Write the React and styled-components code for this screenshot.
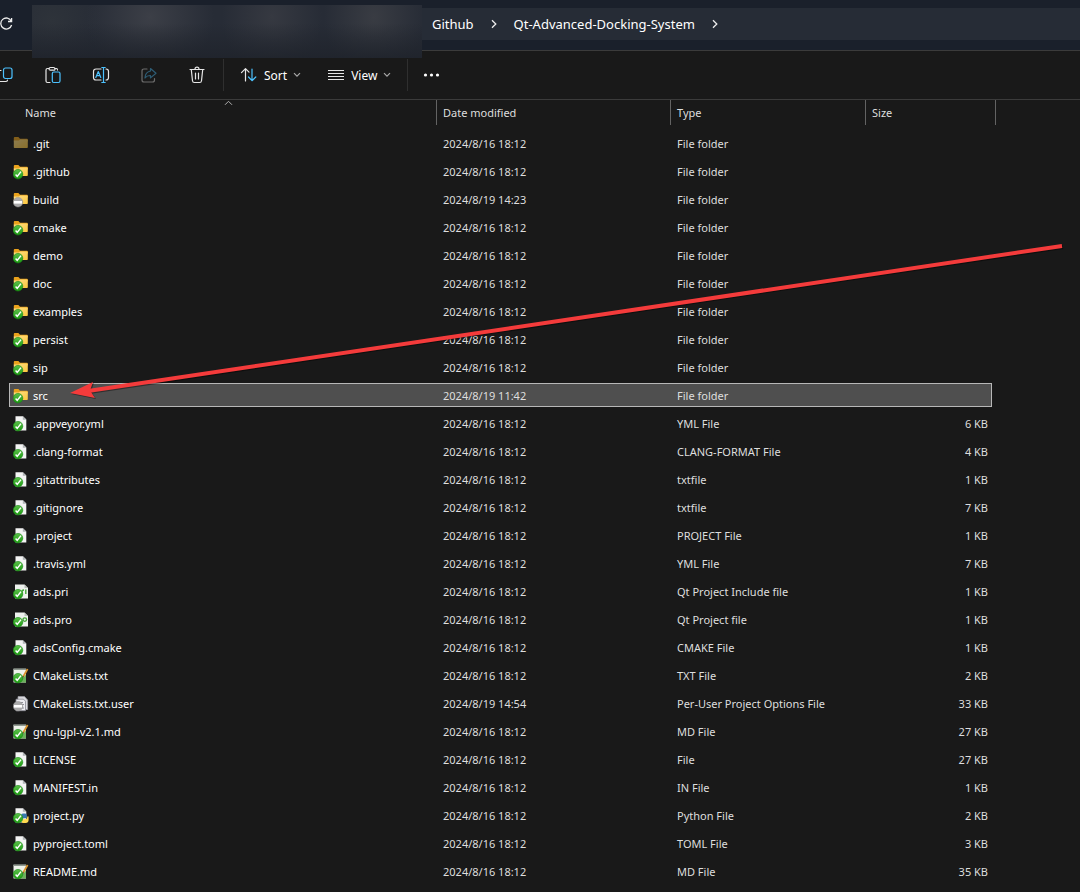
import React from "react";
import styled, { createGlobalStyle } from "styled-components";

const Global = createGlobalStyle`
  * { box-sizing: border-box; }
  body {
    margin: 0;
    background: #191919;
    color: #fff;
    font-family: "Noto Sans", "Open Sans", sans-serif;
    font-size: 12px;
  }
  button { font: inherit; color: inherit; background: none; border: 0; padding: 0; margin: 0; }
  svg { display: block; flex: none; }
`;

const Window = styled.main`
  min-height: 100vh;
  overflow: hidden;
`;

const AddressBar = styled.header`
  position: relative;
  display: flex;
  align-items: center;
  height: 51px;
  padding-bottom: 2px;
  background: #1a202b;
  border-bottom: 1px solid #3b3b3b;
`;

const RefreshButton = styled.button`
  width: 32px;
  height: 32px;
`;

const HiddenPath = styled.div`
  position: absolute;
  z-index: 1;
  left: 32px;
  top: 5px;
  width: 390px;
  height: 53px;
  background:
    linear-gradient(180deg, rgba(31, 35, 43, 0) 35%, rgba(31, 35, 43, 0.85) 100%),
    radial-gradient(ellipse 64px 60px at 118px 12px, #3c3f47, transparent),
    radial-gradient(ellipse 50px 60px at 240px 12px, #363941, transparent),
    radial-gradient(ellipse 50px 60px at 342px 12px, #393c43, transparent),
    radial-gradient(ellipse 50px 50px at 20px 16px, #2e333a, transparent),
    #272c36;
`;

const Crumbs = styled.nav`
  display: flex;
  align-items: center;
  flex: 1;
  height: 32px;
  margin-left: 390px;
  padding-left: 10px;
  background: #262c36;
  font-size: 13px;
`;

const Crumb = styled.a`
  color: #fff;
  text-decoration: none;
  white-space: nowrap;
`;

const CrumbArrow = styled.button`
  width: 40px;
  height: 32px;
  display: grid;
  place-items: center;
`;

const Toolbar = styled.div`
  display: flex;
  align-items: center;
  height: 49px;
  border-bottom: 1px solid #3b3b3b;
`;

const IconTools = styled.div`
  display: flex;
  gap: 30px;
  margin-left: -4px;
  padding-right: 17px;
`;

const MenuTools = styled.div`
  display: flex;
  gap: 26px;
  padding: 0 16px;
`;

const ToolButton = styled.button`
  display: flex;
  align-items: center;
  gap: 6px;
  height: 32px;
  opacity: ${(p) => (p.disabled ? 0.4 : 1)};
`;

const Divider = styled.span`
  width: 1px;
  height: 32px;
  background: #2f2f2f;
`;

const MoreButton = styled(ToolButton)`
  margin-left: 15px;
`;

const List = styled.section`
  position: relative;
  padding-right: 84px;
`;

const Table = styled.table`
  width: 100%;
  table-layout: fixed;
  border-collapse: separate;
  border-spacing: 0;
  font-size: 11px;
  line-height: 16px;
`;

const Column = styled.col`
  width: ${(p) => p.$width};
`;

const HeadCell = styled.th`
  position: relative;
  height: 30px;
  padding: 0 6px 4px ${(p) => (p.$first ? "25px" : "6px")};
  font-weight: 400;
  text-align: left;
  color: #dedede;
  background: linear-gradient(#636363, #636363) right top / 1px 25px no-repeat;
`;

const SortMark = styled.svg`
  position: absolute;
  top: 0;
  left: calc(50% + 5px);
`;

const Row = styled.tr`
  position: relative;
  z-index: 0;
`;

const Cell = styled.td`
  height: 28px;
  padding: 0 8px 0 6px;
  color: #dedede;
  white-space: nowrap;
  text-align: ${(p) => (p.$right ? "right" : "left")};
`;

const NameCell = styled(Cell)`
  padding-left: 13px;
  color: #fff;

  /* The selection frame spans the whole row, which is its containing block. */
  ${Row}[aria-selected="true"] &::before {
    content: "";
    position: absolute;
    z-index: -1;
    inset: 1px 4px 3px 9px;
    background: #4f4f4f;
    border: 1px solid #b8b8b8;
  }
`;

const FileName = styled.div`
  display: flex;
  align-items: center;
  gap: 4px;
`;

const Arrow = styled.svg`
  position: absolute;
  left: 70px;
  top: 140px;
  pointer-events: none;
`;

const W = "#e6e6e6";
const B = "#4cc2ff";

function Icon({ children, size = 18 }) {
  return (
    <svg width={size} height={size} viewBox={`0 0 ${size} ${size}`} fill="none" stroke={W} strokeWidth="1.2" strokeLinecap="round" strokeLinejoin="round" aria-hidden="true">
      {children}
    </svg>
  );
}

function Chevron() {
  return (
    <svg width="8" height="6" viewBox="0 0 8 6" fill="none" stroke="#a8a8a8" strokeWidth="1.2" aria-hidden="true">
      <path d="M1 1.2l3 3 3-3" />
    </svg>
  );
}

function CrumbChevron() {
  return (
    <svg width="6" height="10" viewBox="0 0 6 10" fill="none" stroke="#eee" strokeWidth="1.3" aria-hidden="true">
      <path d="M1 1.3L4.8 5 1 8.7" />
    </svg>
  );
}

function Badge({ kind }) {
  if (kind === "ok")
    return (
      <g>
        <circle cx="5" cy="10.2" r="4.8" fill="url(#ok)" stroke="#188c14" strokeWidth=".6" />
        <path d="M2.6 10.6l1.6 1.8 3.8-4.800" fill="none" stroke="#fff" strokeWidth="1.5" />
      </g>
    );
  if (kind === "ignored")
    return (
      <g>
        <circle cx="5" cy="10.2" r="4.8" fill="#aaa" stroke="#999" strokeWidth=".5" />
        <rect x="1" y="9" width="8" height="2.600" fill="#fff" />
      </g>
    );
  return null;
}

function FileIcon({ kind, badge }) {
  return (
    <svg width="16" height="16" viewBox="0 0 16 16" aria-hidden="true">
      {kind === "folder" && (
        <g opacity={badge ? 1 : 0.5}>
          <path d="M.8 2q0-1 1-1h3.600l1.600 1.700h7q.8 0 .8.8v2h-14z" fill="#eaa21c" />
          <path d="M.8 4.500h5l1.400-1h6.800q.8 0 .8.8v7q0 .7-.8.7H1.600q-.8 0-.8-.7z" fill="url(#folder)" />
        </g>
      )}
      {(kind === "file" || kind === "python") && (
        <g>
          <path d="M2.500.3h7.500l3.300 3.300v11h-10.800z" fill="#f4f4f4" />
          <path d="M9.800.3v3.500h3.500z" fill="#aeb2b4" />
        </g>
      )}
      {kind === "python" && (
        <g>
          <path d="M8 7.500q0-2 2-2h2.200q1.500 0 1.500 1.500v2q0 1.200-1.200 1.200H10q-1.200 0-1.200 1.300H7.500z" fill="#3878b0" />
          <path d="M15.600 8.500v3.500q0 3-3.200 3h-2q-1.600 0-1.600-1.500v-.7q0-1.500 1.500-1.500h2.200q1.700 0 1.700-1.700V8.500z" fill="#ffd94f" />
        </g>
      )}
      {(kind === "pri" || kind === "pro") && (
        <g>
          <path d="M2 .5h9.500l3.500 3.500v10.500h-13z" fill="#eef1ee" />
          <path d="M11.500.5V4H15z" fill="#b8bdb8" />
          {kind === "pri" ? (
            <path d="M9 9.500V7.500q0-1.500 2-1.500M12.800 5.500V10" fill="none" stroke="#43a536" strokeWidth="1.400" />
          ) : (
            <circle cx="11.800" cy="7.600" r="1.800" fill="none" stroke="#43a536" strokeWidth="1.300" />
          )}
        </g>
      )}
      {kind === "note" && (
        <g>
          <path d="M.5.800h12.500v13.700H.5z" fill="#eef2ea" />
          <path d="M.5.500h12.500v1.500H.5z" fill="#8f988f" />
          <path d="M6 14.500l7-8v8z" fill="#6bb05c" />
          <path d="M14.600 1L10 9" stroke="#d9932e" strokeWidth="1.800" />
          <path d="M10.300 8.300l-1 2.200" stroke="#333" strokeWidth="1.100" />
        </g>
      )}
      {kind === "user" && (
        <g>
          <path d="M5 .6h6.500L14.600 4v9.500H5z" fill="#dcdce0" stroke="#9a9aa2" strokeWidth=".8" />
          <path d="M3 3.200h7.500l2 2v9.500H3z" fill="#ececf0" stroke="#888890" strokeWidth=".8" />
          <path d="M5 6.500h5M5 8.500h6M9 12h2" stroke="#85858c" strokeWidth=".9" />
        </g>
      )}
      <Badge kind={badge} />
    </svg>
  );
}

const D = "2024/8/16 18:12";
const files = [
  [".git", D, "File folder", "", "folder", ""],
  [".github", D, "File folder", "", "folder"],
  ["build", "2024/8/19 14:23", "File folder", "", "folder", "ignored"],
  ["cmake", D, "File folder", "", "folder"],
  ["demo", D, "File folder", "", "folder"],
  ["doc", D, "File folder", "", "folder"],
  ["examples", D, "File folder", "", "folder"],
  ["persist", D, "File folder", "", "folder"],
  ["sip", D, "File folder", "", "folder"],
  ["src", "2024/8/19 11:42", "File folder", "", "folder"],
  [".appveyor.yml", D, "YML File", "6 KB", "file"],
  [".clang-format", D, "CLANG-FORMAT File", "4 KB", "file"],
  [".gitattributes", D, "txtfile", "1 KB", "file"],
  [".gitignore", D, "txtfile", "7 KB", "file"],
  [".project", D, "PROJECT File", "1 KB", "file"],
  [".travis.yml", D, "YML File", "7 KB", "file"],
  ["ads.pri", D, "Qt Project Include file", "1 KB", "pri"],
  ["ads.pro", D, "Qt Project file", "1 KB", "pro"],
  ["adsConfig.cmake", D, "CMAKE File", "1 KB", "file"],
  ["CMakeLists.txt", D, "TXT File", "2 KB", "note"],
  ["CMakeLists.txt.user", "2024/8/19 14:54", "Per-User Project Options File", "33 KB", "user", "ignored"],
  ["gnu-lgpl-v2.1.md", D, "MD File", "27 KB", "note"],
  ["LICENSE", D, "File", "27 KB", "file"],
  ["MANIFEST.in", D, "IN File", "1 KB", "file"],
  ["project.py", D, "Python File", "2 KB", "python"],
  ["pyproject.toml", D, "TOML File", "3 KB", "file"],
  ["README.md", D, "MD File", "35 KB", "note"],
];

export default function App() {
  return (
    <Window>
      <Global />
      <AddressBar>
        <RefreshButton aria-label="Refresh">
          <svg width="14" height="14" viewBox="0 0 14 14" fill="none" stroke="#eee" strokeWidth="1.300" aria-hidden="true">
            <path d="M11.300 4.200A5.500 5.500 0 1 0 11.600 8M11.600 1v3.500H8" />
          </svg>
        </RefreshButton>
        <HiddenPath />
        <Crumbs aria-label="Path">
          <Crumb href="#github">Github</Crumb>
          <CrumbArrow aria-label="Github subfolders"><CrumbChevron /></CrumbArrow>
          <Crumb href="#docking">Qt-Advanced-Docking-System</Crumb>
          <CrumbArrow aria-label="Project subfolders"><CrumbChevron /></CrumbArrow>
        </Crumbs>
      </AddressBar>
      <Toolbar role="toolbar">
        <IconTools>
          <ToolButton aria-label="Copy">
            <Icon>
              <path d="M5 4.500H2.500v11h7.500q1.500 0 1.500-1.500" />
              <rect x="7.500" y="2" width="8.500" height="10.500" rx="2" stroke={B} />
            </Icon>
          </ToolButton>
          <ToolButton aria-label="Paste">
            <Icon>
              <path d="M5 2.500H3.500q-1.500 0-1.500 1.500v11q0 1.500 1.500 1.500H6M11 2.500h1.500q1 0 1 1.500" />
              <path d="M5 3q0-1.500 1.500-1.500h3Q11 1.500 11 3t-1.500 1.200h-3Q5 4.200 5 3z" />
              <rect x="8.300" y="6" width="7.700" height="10.500" rx="1.500" stroke={B} />
            </Icon>
          </ToolButton>
          <ToolButton aria-label="Rename">
            <Icon>
              <path d="M9 3H4Q1.500 3 1.500 5.500v6Q1.500 14 4 14h5M14 3q2.500 0 2.500 2.500v6Q16.500 14 14 14" />
              <path d="M3.800 11.500L6.300 5.500l2.500 6M4.700 9.700h3.200M11.500 1.500v15M9.800 1.500h3.400M9.800 16.500h3.400" stroke={B} />
            </Icon>
          </ToolButton>
          <ToolButton aria-label="Share" disabled>
            <Icon>
              <path d="M7 3H4Q2 3 2 5v9q0 2 2 2h8.500q2 0 2-2v-1.500" />
              <path d="M10.500 2.500l5.500 4.700-5.500 4.700V9.500Q7 9.300 5 12q.2-6 5.500-7z" stroke={B} />
            </Icon>
          </ToolButton>
          <ToolButton aria-label="Delete">
            <Icon>
              <path d="M2 3.500h14M7 3.200q0-2 2-2t2 2M3.300 3.700l1.200 11q.2 1.800 1.800 1.800h5.400q1.600 0 1.800-1.800l1.200-11M7.500 7v6M10.500 7v6" />
            </Icon>
          </ToolButton>
        </IconTools>
        <Divider />
        <MenuTools>
          <ToolButton aria-haspopup="menu">
            <Icon>
              <path d="M5.500 15V3M1.500 6.700L5.500 2.700l3.500 3.500" />
              <path d="M12 3v11.500M8.500 11l3.500 3.700L15.800 11" stroke={B} />
            </Icon>
            Sort
            <Chevron />
          </ToolButton>
          <ToolButton aria-haspopup="menu">
            <Icon>
              <path d="M1 4.500h16M1 7.500h16M1 10.500h16M1 13.500h16" strokeWidth="1" strokeLinecap="butt" />
            </Icon>
            View
            <Chevron />
          </ToolButton>
        </MenuTools>
        <Divider />
        <MoreButton aria-label="More options">
          <svg width="18" height="6" viewBox="0 0 18 6" fill="#fff" aria-hidden="true">
            <circle cx="2.500" cy="3" r="1.600" />
            <circle cx="8.500" cy="3" r="1.600" />
            <circle cx="14.500" cy="3" r="1.600" />
          </svg>
        </MoreButton>
      </Toolbar>
      <List>
        <Table>
          <colgroup>
            <Column $width="auto" />
            <Column $width="234px" />
            <Column $width="195px" />
            <Column $width="130px" />
          </colgroup>
          <thead>
            <tr>
              <HeadCell $first aria-sort="ascending">
                Name
                <SortMark width="9" height="6" viewBox="0 0 9 6" fill="none" stroke="#b0b0b0" aria-hidden="true">
                  <path d="M1 4.800L4.500 1.300 8 4.800" />
                </SortMark>
              </HeadCell>
              <HeadCell>Date modified</HeadCell>
              <HeadCell>Type</HeadCell>
              <HeadCell>Size</HeadCell>
            </tr>
          </thead>
          <tbody>
            {files.map(([name, date, type, size, kind, badge = "ok"]) => (
              <Row key={name} aria-selected={name === "src"}>
                <NameCell>
                  <FileName>
                    <FileIcon kind={kind} badge={badge} />
                    {name}
                  </FileName>
                </NameCell>
                <Cell>{date}</Cell>
                <Cell>{type}</Cell>
                <Cell $right>{size}</Cell>
              </Row>
            ))}
          </tbody>
        </Table>
        <Arrow width="1000" height="164" viewBox="70 240 1000 164" aria-hidden="true">
          <defs>
            <linearGradient id="ok" x1="0" y1="0" x2="0" y2="1">
              <stop offset="0" stopColor="#5cc04a" />
              <stop offset="1" stopColor="#1c9a12" />
            </linearGradient>
            <linearGradient id="folder" x1="0" y1="0" x2="1" y2="1">
              <stop offset="0" stopColor="#ffe08a" />
              <stop offset="1" stopColor="#fcc63c" />
            </linearGradient>
          </defs>
          <g transform="translate(1 1)" opacity=".4">
            <path d="M88 391L1062 246" stroke="#000" strokeWidth="4" />
            <path d="M70 393L93 382 90 390.500 95 398z" fill="#000" />
          </g>
          <path d="M88 391L1062 246" stroke="#f43b3b" strokeWidth="4" />
          <path d="M70 393L93 382 90 390.500 95 398z" fill="#f43b3b" />
        </Arrow>
      </List>
    </Window>
  );
}
